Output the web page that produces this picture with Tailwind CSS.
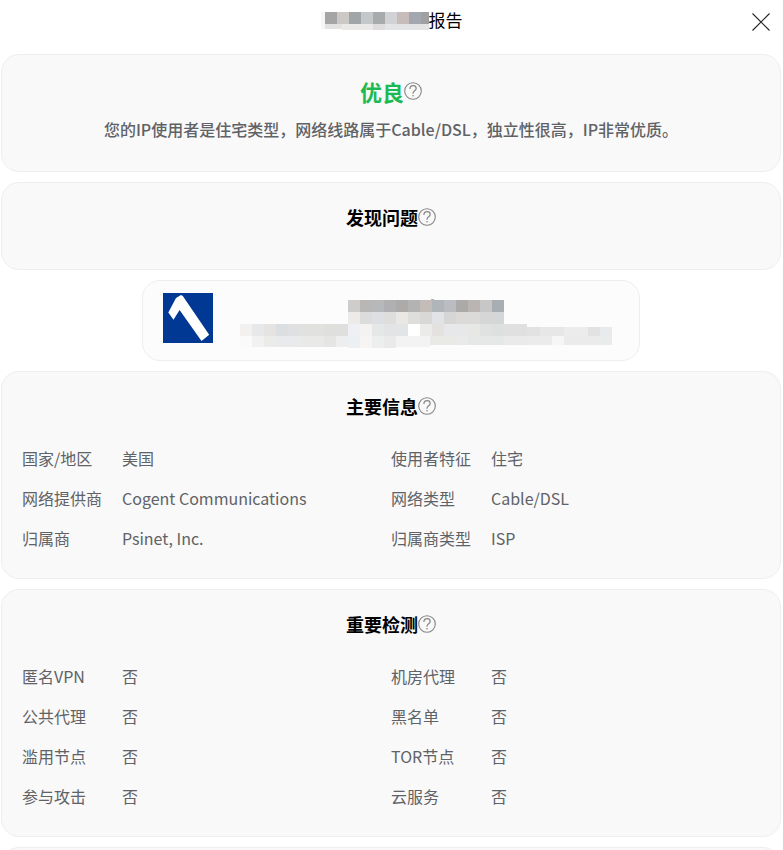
<!DOCTYPE html>
<html lang="zh-CN">
<head>
  <meta charset="UTF-8" />
  <meta name="viewport" content="width=device-width, initial-scale=1.0"/>
  <title>报告</title>
  <script src="https://cdn.jsdelivr.net/npm/@tailwindcss/browser@4"></script>
</head>
<body class="h-screen overflow-hidden bg-white font-['Noto_Sans_CJK_SC',sans-serif] text-base text-[#606266]">

  <svg class="hidden">
    <symbol id="help" viewBox="0 0 18 18">
      <circle cx="9" cy="9" r="8.3" fill="none" stroke="#858585" stroke-width="1.1"/>
      <path d="M5.9 6.9C5.9 4.9 7.2 3.7 9.1 3.7s3.1 1.2 3.1 2.8c0 2.2-3.2 2.4-3.2 4.7v.6" fill="none" stroke="#858585" stroke-width="1.2"/>
      <circle cx="9" cy="13.8" r=".8" fill="#858585"/>
    </symbol>
  </svg>

  <header class="relative flex h-10 items-center justify-center">
    <h1 class="flex items-center text-[17px] leading-6 text-black">
      <svg class="h-6 w-[108px]" viewBox="0 0 108 24" shape-rendering="crispEdges" aria-hidden="true">
        <path fill="#f7f6f5" d="M0 4h4v17H0z"/>
        <path fill="#a5a5a5" d="M4 4h12v12H4z"/>
        <path fill="#ccc8c6" d="M16 4h12v12H16z"/>
        <path fill="#a0a5a8" d="M28 4h12v12H28z"/>
        <path fill="#c5c8c8" d="M40 4h12v12H40z"/>
        <path fill="#a9aaac" d="M52 4h12v12H52z"/>
        <path fill="#d0d2d5" d="M64 4h12v12H64z"/>
        <path fill="#c7bcb9" d="M76 4h12v12H76z"/>
        <path fill="#a3a8b0" d="M88 4h12v12H88z"/>
        <path fill="#a0a0a0" d="M100 4h8v12h-8z"/>
        <path fill="#e3e2e2" d="M4 16h17v5H4z"/>
        <path fill="#ebe9e7" d="M21 16h31v6H21z"/>
        <path fill="#dedcdc" d="M52 16h12v6H52z"/>
        <path fill="#e3e4e6" d="M64 16h24v6H64z"/>
        <path fill="#e4e4e4" d="M88 16h20v6H88z"/>
      </svg>
      报告
    </h1>
    <button type="button" aria-label="关闭" class="absolute top-3 right-3 size-5">
      <svg class="size-5" viewBox="0 0 20 20" fill="none" stroke="#222" stroke-width="1.1">
        <path d="M1.5 1.5l17 17M18.5 1.5l-17 17"/>
      </svg>
    </button>
  </header>

  <main class="flex flex-col gap-2.5 pt-3.5 pr-0.5 pl-px">
    <section class="rounded-[18px] border border-[#eee] bg-[#f9f9f9] p-5 pb-[30px]">
      <h2 class="flex h-8 items-center justify-center text-[22px] font-bold text-[#1db954]">
        优良<button type="button" aria-label="说明"><svg class="size-[18px]"><use href="#help"/></svg></button>
      </h2>
      <p class="mt-2.5 text-center font-medium leading-6">您的IP使用者是住宅类型，网络线路属于Cable/DSL，独立性很高，IP非常优质。</p>
    </section>

    <section class="rounded-[18px] border border-[#eee] bg-[#f9f9f9] p-5">
      <h2 class="mb-[18px] flex h-7 items-center justify-center text-lg font-bold text-black">
        发现问题<button type="button" aria-label="说明"><svg class="size-[18px]"><use href="#help"/></svg></button>
      </h2>
    </section>

    <section class="mx-auto flex h-[81px] w-full max-w-[498px] gap-[27px] rounded-[18px] border border-[#eee] bg-[#fcfcfc] px-5 py-3">
      <svg class="size-[50px] shrink-0" viewBox="0 0 50 50">
        <path fill="#003893" d="M0 0h50v50H0z"/>
        <path fill="#fff" d="M5.3 19.5L13 5l5-3 1.8 1L46.2 41.8 38.5 48 16.6 17 10.5 26.8z"/>
      </svg>
      <svg class="h-[55px] w-[372px]" viewBox="0 0 372 55" shape-rendering="crispEdges" aria-hidden="true">
        <!-- name, dark row -->
        <path fill="#cecdcb" d="M108 7h12v12h-12z"/>
        <path fill="#b8b7b5" d="M120 7h12v12h-12z"/>
        <path fill="#b7b8ba" d="M132 7h12v12h-12z"/>
        <path fill="#b0b0b2" d="M144 7h18v12h-18z"/>
        <path fill="#acaba9" d="M156 7h12v12h-12z"/>
        <path fill="#b3b3b4" d="M168 7h12v12h-12z"/>
        <path fill="#c4bcb9" d="M180 7h12v12h-12z"/>
        <path fill="#b0b5b9" d="M192 7h12v12h-12z"/>
        <path fill="#babcc2" d="M204 7h12v12h-12z"/>
        <path fill="#abaaa8" d="M216 7h12v12h-12z"/>
        <path fill="#bab5b2" d="M228 7h12v12h-12z"/>
        <path fill="#c7c7c7" d="M240 7h12v12h-12z"/>
        <path fill="#a9aeb2" d="M252 7h12v12h-12z"/>
        <path fill="#aab1b8" d="M191 6h3v1h-3z"/>
        <!-- name, light row -->
        <path fill="#edebe9" d="M108 19h12v12h-12z"/>
        <path fill="#dcdcdc" d="M120 19h12v12h-12z"/>
        <path fill="#dddfe2" d="M132 19h24v12h-24z"/>
        <path fill="#dededd" d="M144 19h12v12h-12zM168 19h12v12h-12z"/>
        <path fill="#e9e8e5" d="M156 19h12v12h-12z"/>
        <path fill="#dad8d6" d="M180 19h12v12h-12z"/>
        <path fill="#e1e3e6" d="M192 19h12v12h-12z"/>
        <path fill="#d6d6d6" d="M204 19h12v12h-12zM240 19h12v12h-12z"/>
        <path fill="#dcdad8" d="M216 19h24v12h-24z"/>
        <path fill="#d5d6d8" d="M252 19h12v12h-12z"/>
        <!-- address, upper row -->
        <path fill="#f2f1ef" d="M0 31h12v12H0z"/>
        <path fill="#e7e8ea" d="M12 31h12v12H12z"/>
        <path fill="#e5e4e2" d="M24 31h12v12H24z"/>
        <path fill="#dcdfe2" d="M36 31h12v12H36z"/>
        <path fill="#dfe0e2" d="M48 31h12v12H48z"/>
        <path fill="#e1e1df" d="M60 31h24v12H60z"/>
        <path fill="#dfdfde" d="M84 31h24v12H84z"/>
        <path fill="#eef0f4" d="M108 31h12v12h-12z"/>
        <path fill="#f4f3f1" d="M120 31h12v12h-12z"/>
        <path fill="#e5e8e7" d="M132 31h12v12h-12z"/>
        <path fill="#e2e4e6" d="M144 31h24v12h-24z"/>
        <path fill="#fff" d="M168 31h12v12h-12z"/>
        <path fill="#ebebea" d="M180 31h12v12h-12z"/>
        <path fill="#e3e2df" d="M192 31h12v12h-12z"/>
        <path fill="#e7e8e9" d="M204 31h24v12h-24z"/>
        <path fill="#e7e8e5" d="M228 31h12v12h-12z"/>
        <path fill="#dfe2e0" d="M240 31h12v12h-12z"/>
        <path fill="#dee0df" d="M252 31h12v12h-12z"/>
        <path fill="#e0e0e0" d="M264 31h23v12h-23z"/>
        <path fill="#e2e2e2" d="M287 34h13v9h-13zM348 34h12v9h-12z"/>
        <path fill="#e6e7e6" d="M300 34h24v9h-24z"/>
        <path fill="#ececec" d="M324 34h24v9h-24z"/>
        <path fill="#e8eaeb" d="M360 34h12v9h-12z"/>
        <!-- address, lower row -->
        <path fill="#fafafa" d="M0 43h12v11H0z"/>
        <path fill="#f1f1f2" d="M12 43h12v11H12z"/>
        <path fill="#ebebe9" d="M24 43h12v11H24z"/>
        <path fill="#e8eaeb" d="M36 43h24v11H36z"/>
        <path fill="#e9e9e8" d="M60 43h24v11H60z"/>
        <path fill="#e5e5e4" d="M84 43h12v11H84z"/>
        <path fill="#eeeeee" d="M96 43h12v11H96z"/>
        <path fill="#ecf0f3" d="M108 43h12v12h-12z"/>
        <path fill="#f7f5f3" d="M120 43h12v12h-12z"/>
        <path fill="#ecefee" d="M132 43h12v12h-12z"/>
        <path fill="#eaeaea" d="M144 43h12v12h-12z"/>
        <path fill="#f3f3f3" d="M156 43h34v11h-34z"/>
        <path fill="#e9e9e6" d="M190 43h26v9h-26z"/>
        <path fill="#eaeaea" d="M216 43h12v9h-12zM264 43h24v9h-24z"/>
        <path fill="#e6e8e7" d="M228 43h36v9h-36z"/>
        <path fill="#ebebeb" d="M288 43h24v9h-24zM324 43h36v9h-36z"/>
        <path fill="#f6f6f6" d="M312 43h12v9h-12z"/>
        <path fill="#e9eceb" d="M360 43h12v9h-12z"/>
      </svg>
    </section>

    <section class="rounded-[18px] border border-[#eee] bg-[#f9f9f9] p-5">
      <h2 class="mb-[18px] flex h-7 items-center justify-center text-lg font-bold text-black">
        主要信息<button type="button" aria-label="说明"><svg class="size-[18px]"><use href="#help"/></svg></button>
      </h2>
      <dl class="grid grid-cols-2 leading-10">
        <div class="flex"><dt class="w-[100px]">国家/地区</dt><dd>美国</dd></div>
        <div class="flex"><dt class="w-[100px]">使用者特征</dt><dd>住宅</dd></div>
        <div class="flex"><dt class="w-[100px]">网络提供商</dt><dd>Cogent Communications</dd></div>
        <div class="flex"><dt class="w-[100px]">网络类型</dt><dd>Cable/DSL</dd></div>
        <div class="flex"><dt class="w-[100px]">归属商</dt><dd>Psinet, Inc.</dd></div>
        <div class="flex"><dt class="w-[100px]">归属商类型</dt><dd>ISP</dd></div>
      </dl>
    </section>

    <section class="rounded-[18px] border border-[#eee] bg-[#f9f9f9] p-5">
      <h2 class="mb-[18px] flex h-7 items-center justify-center text-lg font-bold text-black">
        重要检测<button type="button" aria-label="说明"><svg class="size-[18px]"><use href="#help"/></svg></button>
      </h2>
      <dl class="grid grid-cols-2 leading-10">
        <div class="flex"><dt class="w-[100px]">匿名VPN</dt><dd>否</dd></div>
        <div class="flex"><dt class="w-[100px]">机房代理</dt><dd>否</dd></div>
        <div class="flex"><dt class="w-[100px]">公共代理</dt><dd>否</dd></div>
        <div class="flex"><dt class="w-[100px]">黑名单</dt><dd>否</dd></div>
        <div class="flex"><dt class="w-[100px]">滥用节点</dt><dd>否</dd></div>
        <div class="flex"><dt class="w-[100px]">TOR节点</dt><dd>否</dd></div>
        <div class="flex"><dt class="w-[100px]">参与攻击</dt><dd>否</dd></div>
        <div class="flex"><dt class="w-[100px]">云服务</dt><dd>否</dd></div>
      </dl>
    </section>

    <section class="rounded-[18px] border border-[#eee] bg-[#f9f9f9] p-5"></section>
  </main>

</body>
</html>
